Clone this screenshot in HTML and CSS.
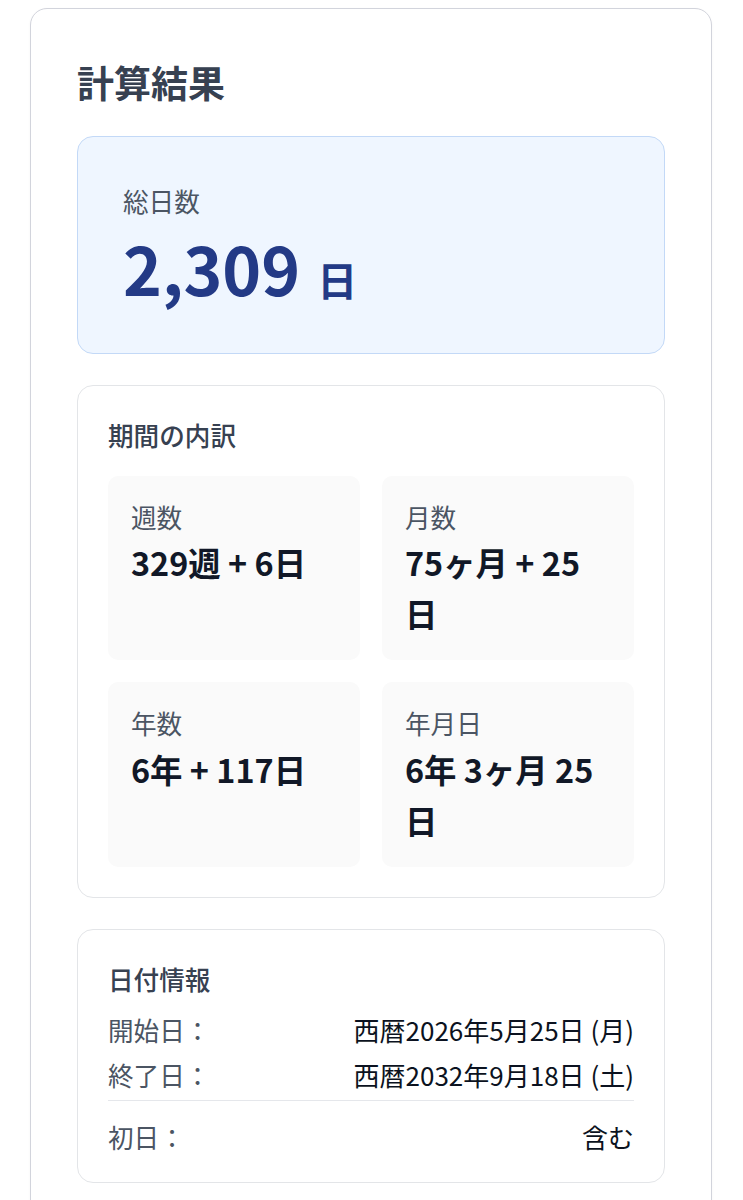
FILE: index.html
```html
<!DOCTYPE html>
<html lang="ja">
<head>
<meta charset="utf-8">
<title>計算結果</title>
<link rel="stylesheet" href="styles.css">
</head>
<body>
<div class="page">
  <section class="result-card">
    <h2 class="title">計算結果</h2>

    <div class="total-box">
      <div class="total-label">総日数</div>
      <div class="total-value"><span class="total-num">2,309</span><span class="total-unit">日</span></div>
    </div>

    <div class="panel breakdown">
      <h3 class="panel-title">期間の内訳</h3>
      <div class="grid">
        <div class="cell">
          <div class="cell-label">週数</div>
          <div class="cell-value">329週 + 6日</div>
        </div>
        <div class="cell">
          <div class="cell-label">月数</div>
          <div class="cell-value">75ヶ月 + 25日</div>
        </div>
        <div class="cell">
          <div class="cell-label">年数</div>
          <div class="cell-value">6年 + 117日</div>
        </div>
        <div class="cell">
          <div class="cell-label">年月日</div>
          <div class="cell-value">6年 3ヶ月 25日</div>
        </div>
      </div>
    </div>

    <div class="panel dates">
      <h3 class="panel-title dates-title">日付情報</h3>
      <div class="rows">
        <div class="row"><span class="row-label">開始日：</span><span class="row-value">西暦2026年5月25日 (月)</span></div>
        <div class="row"><span class="row-label">終了日：</span><span class="row-value">西暦2032年9月18日 (土)</span></div>
      </div>
      <div class="row row-sep"><span class="row-label">初日：</span><span class="row-value">含む</span></div>
    </div>
  </section>
</div>
</body>
</html>
```

FILE: styles.css
```css
* { box-sizing: border-box; }

html, body {
  margin: 0;
  padding: 0;
  background: #ffffff;
}

body {
  font-family: "Noto Sans CJK JP", "Noto Sans", sans-serif;
  color: #111827;
}

.page {
  padding: 8px 31px 0 30px;
}

.result-card {
  border: 1px solid #d2d4dc;
  border-radius: 17px;
  padding: 46px 46px 60px;
  background: #ffffff;
  box-shadow: 0 1px 3px rgba(0, 0, 0, 0.04);
}

.title {
  margin: 0 0 27px;
  font-size: 37px;
  line-height: 54px;
  font-weight: 700;
  color: #374151;
}

.total-box {
  background: #eff6ff;
  border: 1px solid #c3d9f7;
  border-radius: 16px;
  padding: 45px 45px 53px;
}

.total-label {
  font-size: 25.6px;
  line-height: 38.4px;
  color: #4b5563;
}

.total-value {
  margin-top: 14px;
  line-height: 1;
  color: #233a86;
  font-weight: 700;
  white-space: nowrap;
}

.total-num {
  font-size: 66px;
  line-height: 1;
}

.total-unit {
  font-size: 40px;
  line-height: 1;
  margin-left: 17px;
}

.panel {
  margin-top: 31px;
  border: 1px solid #e3e5e8;
  border-radius: 16px;
  padding: 30px;
  background: #ffffff;
}

.panel-title {
  margin: 0 0 21px;
  font-size: 25.6px;
  line-height: 38.4px;
  font-weight: 500;
  color: #374151;
}

.grid {
  display: grid;
  grid-template-columns: 1fr 1fr;
  gap: 22px;
}

.cell {
  background: #fafafa;
  border-radius: 10px;
  padding: 22px 30px 22px 23px;
}

.cell-label {
  font-size: 25.6px;
  line-height: 38.4px;
  color: #4b5563;
}

.cell-value {
  font-size: 32.4px;
  line-height: 51px;
  font-weight: 700;
  color: #111827;
}

.dates {
  padding-bottom: 26px;
}

.dates-title {
  margin-bottom: 12.8px;
}

.rows {
  display: flex;
  flex-direction: column;
  gap: 6.4px;
}

.row {
  display: flex;
  justify-content: space-between;
  align-items: baseline;
  font-size: 25.6px;
  line-height: 38.4px;
}

.row-label {
  color: #4b5563;
}

.row-value {
  font-size: 26px;
  color: #0b1220;
}

.row-sep {
  margin-top: 6px;
  padding-top: 17px;
  border-top: 1.5px solid #e5e7eb;
}
```
